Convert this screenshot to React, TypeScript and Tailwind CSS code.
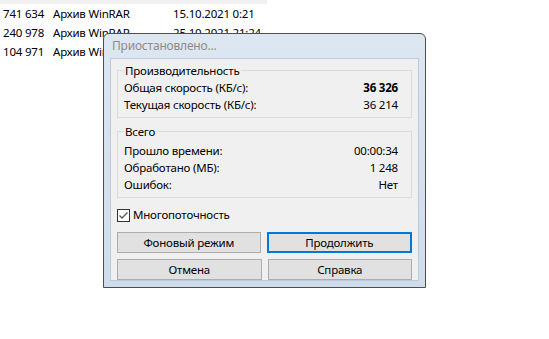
import React from "react";

const rows = [
  ["741 634", "Архив WinRAR", "15.10.2021 0:21"],
  ["240 978", "Архив WinRAR", "25.10.2021 21:24"],
  ["104 971", "Архив WinRAR", "25.10.2021 21:24"],
];

function Row({ label, value, bold }: { label: string; value: string; bold?: boolean }) {
  return (
    <div className="flex justify-between h-[17px] items-center">
      <span>{label}</span>
      <span className={bold ? "font-bold" : ""}>{value}</span>
    </div>
  );
}

function Btn({ children, primary }: { children: React.ReactNode; primary?: boolean }) {
  return (
    <div
      className={
        "flex-1 h-[21px] flex items-center justify-center bg-[#e1e1e1] " +
        (primary ? "border-2 border-[#0078d7]" : "border border-[#adadad]")
      }
    >
      {children}
    </div>
  );
}

export default function App() {
  return (
    <div
      className="relative w-[549px] h-[339px] bg-white overflow-hidden text-[11.5px] tracking-[-0.2px] text-black"
      style={{ fontFamily: '"Noto Sans", "Open Sans", sans-serif' }}
    >
      <div className="w-[267px] h-[4px] bg-[#f0f0f0]" />
      <div className="flex flex-col">
        {rows.map((r, i) => (
          <div key={i} className="flex h-[19px] items-center">
            <span className="w-[53px] pl-[3px]">{r[0]}</span>
            <span className="w-[120px]">{r[1]}</span>
            <span>{r[2]}</span>
          </div>
        ))}
      </div>

      <div className="absolute left-[103px] top-[33px] w-[323px] h-[255px] border border-[#4d4d4d] rounded-t-[6px] bg-gradient-to-b from-[#dde7f1] to-[#cfdcea] flex flex-col">
        <div className="h-[26px] flex items-center pl-[8px] text-[#8c8c8c] text-[12px]">Приостановлено...</div>
        <div className="flex-1 mx-[6px] mb-[6px] bg-[#f0f0f0] border border-[#bccbdb] px-[6px] pt-[5px] flex flex-col">
          <div className="relative border border-[#dcdcdc] pl-[6px] pr-[13px] pt-[8px] pb-[4px] mt-[6px]">
            <span className="absolute -top-[9px] left-[6px] px-[1px] bg-[#f0f0f0]">Производительность</span>
            <Row label="Общая скорость (КБ/с):" value="36 326" bold />
            <Row label="Текущая скорость (КБ/с):" value="36 214" />
          </div>
          <div className="relative border border-[#dcdcdc] pl-[6px] pr-[13px] pt-[10px] pb-[4px] mt-[13px]">
            <span className="absolute -top-[9px] left-[6px] px-[1px] bg-[#f0f0f0]">Всего</span>
            <Row label="Прошло времени:" value="00:00:34" />
            <Row label="Обработано (МБ):" value="1 248" />
            <Row label="Ошибок:" value="Нет" />
          </div>
          <div className="flex items-center mt-[9px] h-[16px]">
            <div className="w-[13px] h-[13px] border border-[#333] bg-white flex items-center justify-center mr-[3px]">
              <svg width="11" height="11" viewBox="0 0 11 11">
                <path d="M1.5 5.5 L4 8 L9.5 2.5" stroke="#555" strokeWidth="1.3" fill="none" />
              </svg>
            </div>
            <span>Многопоточность</span>
          </div>
          <div className="flex gap-[6px] mt-[9px]">
            <Btn>Фоновый режим</Btn>
            <Btn primary>Продолжить</Btn>
          </div>
          <div className="flex gap-[6px] mt-[6px]">
            <Btn>Отмена</Btn>
            <Btn>Справка</Btn>
          </div>
        </div>
      </div>
    </div>
  );
}
